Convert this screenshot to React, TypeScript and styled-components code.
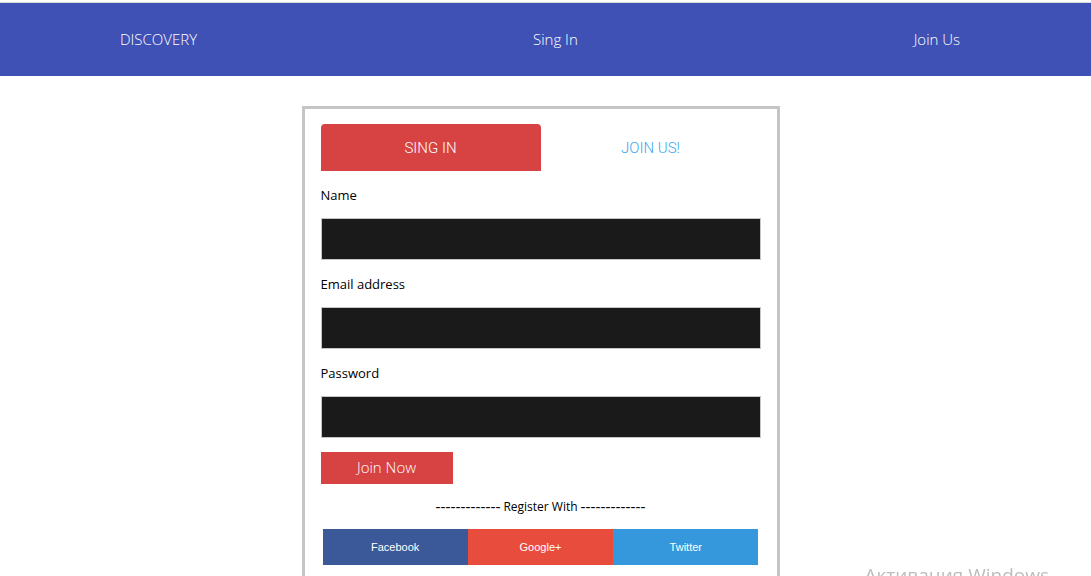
import React from "react";
import styled, { createGlobalStyle } from "styled-components";

const GlobalStyle = createGlobalStyle`
  * { box-sizing: border-box; }
  body {
    margin: 0;
    background: #fff;
    color: #000;
    font-family: "Open Sans", "Noto Sans", sans-serif;
  }
`;

const Page = styled.div`
  height: 100vh;
  overflow: hidden;
  padding-top: 2px;
`;

const NavBar = styled.nav`
  display: flex;
  justify-content: space-between;
  align-items: center;
  height: 74px;
  padding: 0 12% 2px 11%;
  border-top: 1px solid #d9d9dc;
  background: #3f51b5;
`;

const NavLink = styled.a`
  color: #fff;
  font-size: 15px;
  font-weight: 300;
  line-height: 20px;
  text-decoration: none;
`;

const Main = styled.main`
  display: flex;
  justify-content: center;
  padding: 30px 10px 30px 0;
`;

const Card = styled.form`
  width: 100%;
  max-width: 478px;
  padding: 15px 16px;
  border: 3px solid #c5c5c5;
`;

const Tabs = styled.div`
  display: grid;
  grid-template-columns: 1fr 1fr;
  margin-bottom: 14px;
`;

const Tab = styled.button<{ $active?: boolean }>`
  height: 47px;
  padding: 0;
  border: 0;
  border-radius: 4px 4px 0 0;
  background: ${(p) => (p.$active ? "#d74242" : "transparent")};
  color: ${(p) => (p.$active ? "#fff" : "#35a8f5")};
  font-family: Roboto, "Liberation Sans", sans-serif;
  font-size: 15px;
  font-weight: 300;
`;

const Field = styled.div`
  display: flex;
  flex-direction: column;
  gap: 12px;
  margin-bottom: 14px;
`;

const Label = styled.label`
  font-size: 13px;
  line-height: 21px;
`;

const Input = styled.input`
  width: 100%;
  height: 42px;
  padding: 0 12px;
  border: 1px solid #c5c5c5;
  background: #1a1a1a;
  color: #fff;
  font: inherit;
`;

const SubmitButton = styled.button`
  display: block;
  width: 132px;
  height: 32px;
  padding: 0 0 2px;
  border: 0;
  background: #d74242;
  color: #fff;
  font-family: inherit;
  font-size: 15px;
  font-weight: 300;
`;

const Divider = styled.p`
  display: flex;
  justify-content: center;
  gap: 3px;
  margin: 14px 0 13px;
  font-size: 12px;
  line-height: 18px;
`;

const Dashes = styled.span`
  font-family: "Liberation Sans", Arial, sans-serif;
  font-size: 15px;
`;

const SocialRow = styled.div`
  display: grid;
  grid-template-columns: repeat(3, 1fr);
  padding: 0 2px;
`;

const SocialButton = styled.button<{ $color: string }>`
  height: 36px;
  padding: 0;
  border: 0;
  background: ${(p) => p.$color};
  color: #fff;
  font-family: "Liberation Sans", Arial, sans-serif;
  font-size: 11px;
`;

const Watermark = styled.div`
  position: fixed;
  right: 42px;
  bottom: -12px;
  color: #bdbdbd;
  font-size: 19px;
  line-height: 26px;
  white-space: nowrap;
`;

const fields = [
  { id: "name", label: "Name", type: "text" },
  { id: "email", label: "Email address", type: "email" },
  { id: "password", label: "Password", type: "password" },
];

const networks = [
  { name: "Facebook", color: "#3b5998" },
  { name: "Google+", color: "#e84c3d" },
  { name: "Twitter", color: "#3598dc" },
];

export default function App() {
  return (
    <>
      <GlobalStyle />
      <Page>
        <NavBar>
          <NavLink href="#">DISCOVERY</NavLink>
          <NavLink href="#signin">Sing In</NavLink>
          <NavLink href="#join">Join Us</NavLink>
        </NavBar>
        <Main>
          <Card>
            <Tabs>
              <Tab type="button" $active>SING IN</Tab>
              <Tab type="button">JOIN US!</Tab>
            </Tabs>
            {fields.map((f) => (
              <Field key={f.id}>
                <Label htmlFor={f.id}>{f.label}</Label>
                <Input id={f.id} type={f.type} />
              </Field>
            ))}
            <SubmitButton type="submit">Join Now</SubmitButton>
            <Divider>
              <Dashes>-------------</Dashes>
              <span>Register With</span>
              <Dashes>-------------</Dashes>
            </Divider>
            <SocialRow>
              {networks.map((n) => (
                <SocialButton key={n.name} type="button" $color={n.color}>
                  {n.name}
                </SocialButton>
              ))}
            </SocialRow>
          </Card>
        </Main>
        <Watermark>Активация Windows</Watermark>
      </Page>
    </>
  );
}
